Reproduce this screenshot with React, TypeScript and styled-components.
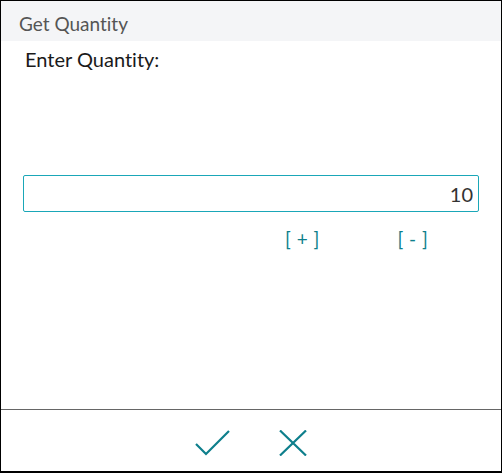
import styled, { createGlobalStyle } from 'styled-components';

const GlobalStyle = createGlobalStyle`
  html, body {
    margin: 0;
    padding: 0;
    background: #ffffff;
  }
  * {
    box-sizing: border-box;
  }
`;

const TEAL = '#0e7f8c';

export default function App() {
  return (
    <>
      <GlobalStyle />
      <StyledDialog>
        <StyledHeader>Get Quantity</StyledHeader>
        <StyledBody>
          <StyledLabel>Enter Quantity:</StyledLabel>
          <StyledInput type="text" defaultValue="10" />
          <StyledStepRow>
            <StyledStep>[ + ]</StyledStep>
            <StyledStep>[ - ]</StyledStep>
          </StyledStepRow>
        </StyledBody>
        <StyledFooter>
          <StyledIconButton aria-label="OK">
            <svg width="35" height="26" viewBox="0 0 35 26" fill="none">
              <path d="M1 14 L11 24 L34 1" stroke={TEAL} strokeWidth="2.2" />
            </svg>
          </StyledIconButton>
          <StyledIconButton aria-label="Cancel">
            <svg width="28" height="26" viewBox="0 0 28 26" fill="none">
              <path d="M1 0.5 L27 25.5 M27 0.5 L1 25.5" stroke={TEAL} strokeWidth="2.2" />
            </svg>
          </StyledIconButton>
        </StyledFooter>
      </StyledDialog>
    </>
  );
}

const StyledDialog = styled.div`
  display: flex;
  flex-direction: column;
  width: 502px;
  height: 473px;
  border: 1px solid #000000;
  border-bottom-width: 2px;
  font-family: Lato, 'Open Sans', sans-serif;
  font-variant-ligatures: none;
  background: #ffffff;
`;

const StyledHeader = styled.div`
  height: 40px;
  padding: 11px 0 0 18px;
  background: #f4f5f7;
  color: #555555;
  font-size: 19px;
  line-height: 24px;
`;

const StyledBody = styled.div`
  flex: 1;
  display: flex;
  flex-direction: column;
  padding: 0 22px;
`;

const StyledLabel = styled.div`
  margin: 4px 0 0 2px;
  color: #1a1a1a;
  font-size: 20px;
  line-height: 28px;
`;

const StyledInput = styled.input`
  width: 456px;
  height: 37px;
  margin-top: 102px;
  padding: 0 5px;
  border: 1px solid #1aa7b8;
  border-radius: 2px;
  outline: none;
  color: #333333;
  font-family: inherit;
  font-size: 20px;
  text-align: right;
`;

const StyledStepRow = styled.div`
  display: flex;
  gap: 78px;
  padding: 15px 0 0 262px;
`;

const StyledStep = styled.span`
  color: ${TEAL};
  font-size: 19px;
  line-height: 24px;
  word-spacing: 1px;
`;

const StyledFooter = styled.div`
  display: flex;
  justify-content: center;
  align-items: center;
  gap: 49px;
  height: 62px;
  padding-top: 4px;
  border-top: 1.5px solid #666666;
`;

const StyledIconButton = styled.button`
  display: flex;
  padding: 0;
  border: none;
  background: none;
  cursor: pointer;
`;
